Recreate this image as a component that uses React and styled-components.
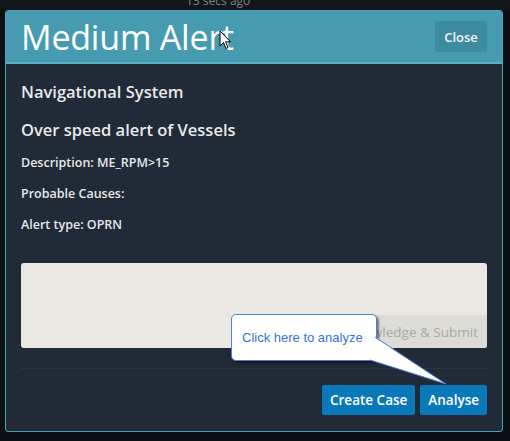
import React from 'react';
import styled, { createGlobalStyle } from 'styled-components';

const GlobalStyle = createGlobalStyle`
  html, body {
    margin: 0;
    padding: 0;
    background: #0c0f13;
  }
  body {
    font-family: "Open Sans", "Liberation Sans", sans-serif;
  }
`;

const Page = styled.div`
  position: relative;
  width: 510px;
  height: 441px;
  overflow: hidden;
  background: #0c0f13;
`;

// strip of the page behind the modal, mostly cut off
const TopStrip = styled.div`
  height: 10px;
  overflow: hidden;
  background: #12161b;
  padding-left: 186px;

  span {
    display: block;
    margin-top: -6px;
    font-size: 12px;
    line-height: 14px;
    color: #7d848c;
  }
`;

const Modal = styled.div`
  margin-left: 5px;
  width: 496px;
  height: 420px;
  border: 1px solid #4c9fb4;
  border-radius: 3px;
  background: #212a37;
  display: flex;
  flex-direction: column;
  overflow: hidden;
`;

const Header = styled.div`
  height: 51px;
  flex: none;
  background: #469bb1;
  border-bottom: 2px solid #5cb0c5;
  display: flex;
  align-items: center;
  justify-content: space-between;
  padding: 0 15px 0 15px;
`;

const Title = styled.h1`
  margin: 0;
  font-size: 34px;
  font-weight: 400;
  color: #ffffff;
  letter-spacing: -0.2px;
`;

const CloseButton = styled.button`
  width: 52px;
  height: 31px;
  border: none;
  border-radius: 2px;
  background: #3d8b9f;
  color: #f2f6f8;
  font-family: inherit;
  font-size: 13px;
  font-weight: 600;
  padding: 0;
`;

const Body = styled.div`
  flex: 1;
  padding: 0 15px;
  display: flex;
  flex-direction: column;
`;

const Heading = styled.h4`
  margin: ${p => p.$top}px 0 0;
  font-size: 16.5px;
  font-weight: 600;
  line-height: 20px;
  color: #e8e9ea;
`;

const InfoLine = styled.p`
  margin: ${p => p.$top}px 0 0;
  font-size: 12.5px;
  font-weight: 600;
  line-height: 16px;
  color: #e6e7e8;
`;

const Comment = styled.div`
  margin-top: 30px;
  height: 85px;
  border-radius: 3px;
  background: #e9e8e2;
  display: flex;
  align-items: flex-end;
  justify-content: flex-end;
  overflow: hidden;
`;

const SubmitButton = styled.button`
  height: 33px;
  border: none;
  background: #dcdbd6;
  color: #a9a9a5;
  font-family: inherit;
  font-size: 13.5px;
  padding: 0 9px 0 10px;
`;

const Divider = styled.div`
  margin-top: 20px;
  height: 1px;
  background: #2a3442;
`;

const Footer = styled.div`
  display: flex;
  justify-content: flex-end;
  gap: 5px;
  margin-top: 16px;
`;

const ActionButton = styled.button`
  height: 30px;
  padding: 0 8px;
  border: none;
  border-radius: 2px;
  background: #0a79b9;
  color: #ffffff;
  font-family: inherit;
  font-size: 13.5px;
  font-weight: 600;
`;

// tooltip overlay pointing at the Analyse button
const Callout = styled.div`
  position: absolute;
  left: 231px;
  top: 314px;
  width: 146px;
  height: 47px;
  background: #ffffff;
  border: 1px solid #4a7fd6;
  border-radius: 5px;
  box-shadow: 2px 2px 2px rgba(0, 0, 0, 0.45);
  display: flex;
  align-items: center;
  padding-left: 10px;
  box-sizing: border-box;
  font-family: "Liberation Sans", sans-serif;
  font-size: 13px;
  color: #3c6fd6;
`;

const Tail = styled.svg`
  position: absolute;
  left: 368px;
  top: 334px;
`;

const Cursor = styled.svg`
  position: absolute;
  left: 219px;
  top: 30px;
`;

export default function App() {
  return (
    <Page>
      <GlobalStyle />
      <TopStrip><span>13 secs ago</span></TopStrip>
      <Modal>
        <Header>
          <Title>Medium Alert</Title>
          <CloseButton>Close</CloseButton>
        </Header>
        <Body>
          <Heading $top={18}>Navigational System</Heading>
          <Heading $top={18}>Over speed alert of Vessels</Heading>
          <InfoLine $top={15}>Description: ME_RPM&gt;15</InfoLine>
          <InfoLine $top={15}>Probable Causes:</InfoLine>
          <InfoLine $top={15}>Alert type: OPRN</InfoLine>
          <Comment>
            <SubmitButton>Acknowledge &amp; Submit</SubmitButton>
          </Comment>
          <Divider />
          <Footer>
            <ActionButton>Create Case</ActionButton>
            <ActionButton>Analyse</ActionButton>
          </Footer>
        </Body>
      </Modal>
      <Callout>Click here to analyze</Callout>
      <Tail width="82" height="54" viewBox="0 0 82 54">
        <polygon points="6,3 78,50 2,26" fill="#ffffff" />
        <polyline points="7,3 78,50 2,26" fill="none" stroke="#4a7fd6" strokeWidth="1" />
      </Tail>
      <Cursor width="13" height="21" viewBox="0 0 13 21">
        <path d="M1 1 L1 16 L4.5 12.5 L7 18.5 L9 17.6 L6.6 11.8 L11.5 11.8 Z" fill="#ffffff" stroke="#000000" strokeWidth="1" strokeLinejoin="round" />
      </Cursor>
    </Page>
  );
}
